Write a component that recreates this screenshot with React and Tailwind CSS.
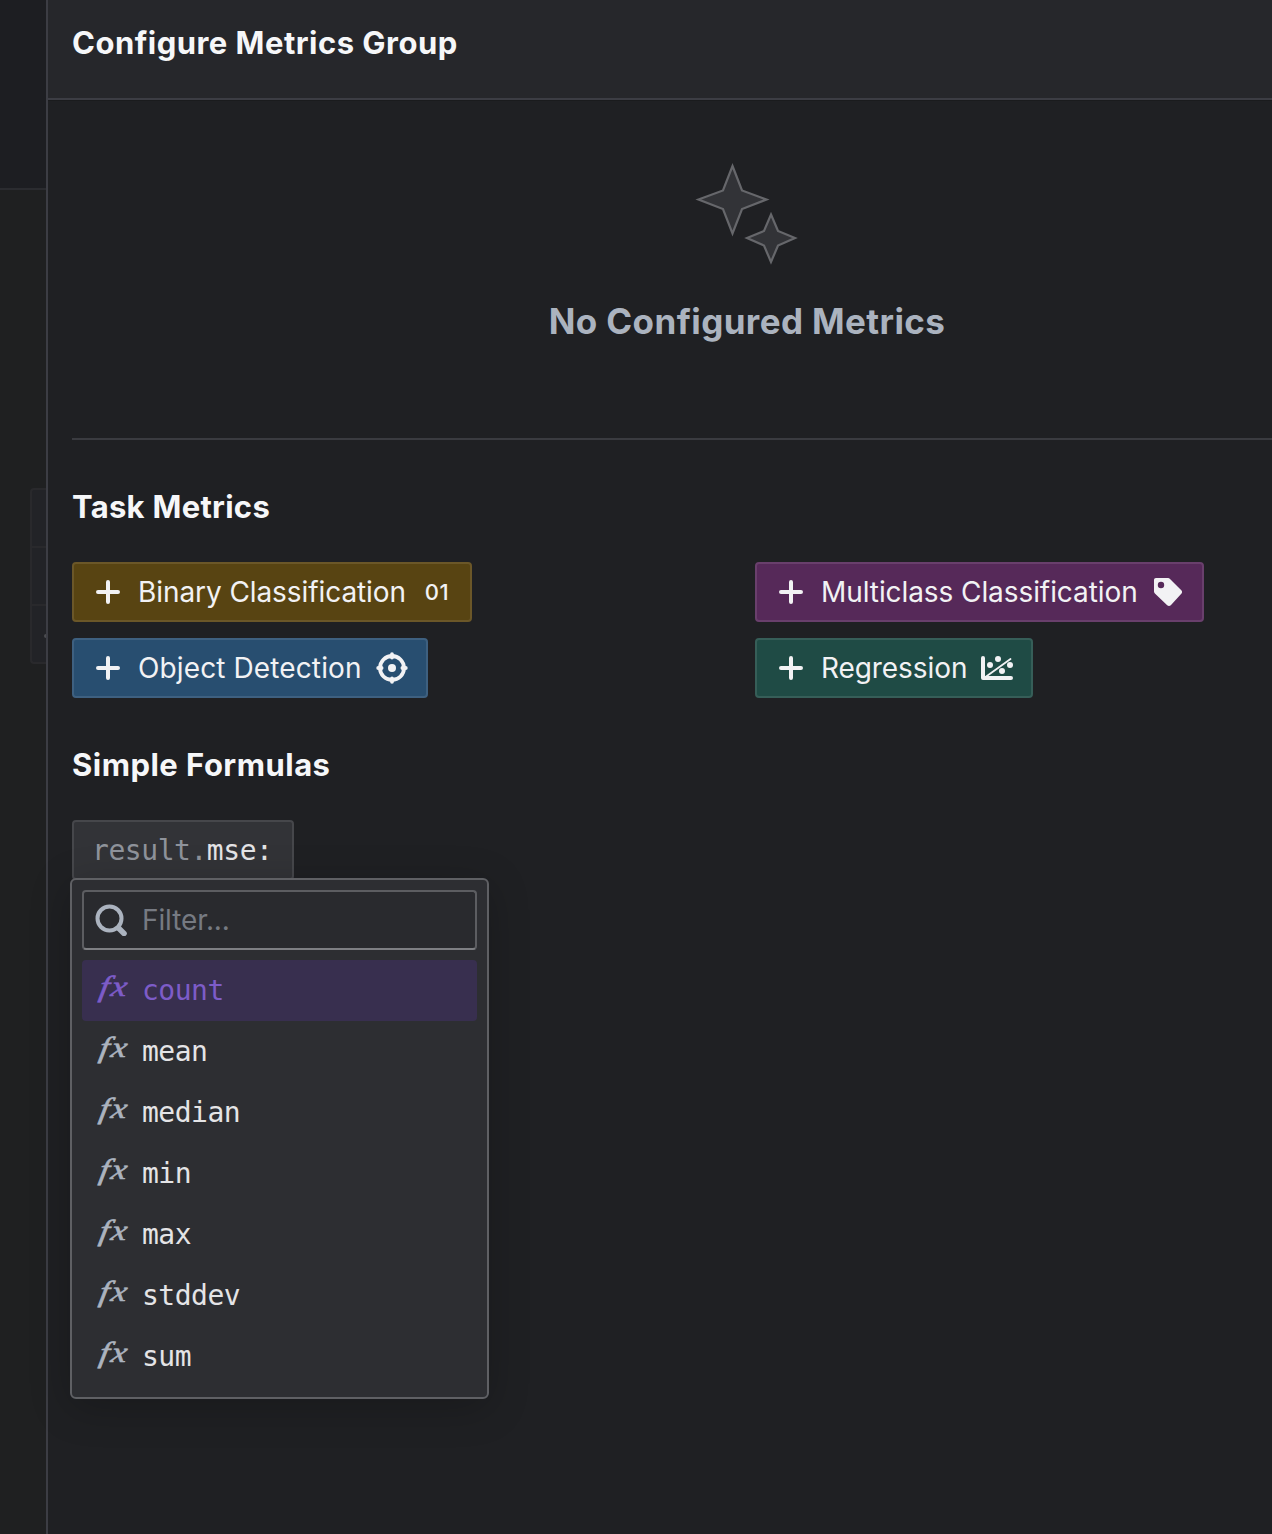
const Plus = () => (
  <svg className="size-8 shrink-0" viewBox="0 0 16 16" fill="none" stroke="currentColor" strokeWidth="2" strokeLinecap="round">
    <path d="M8 3v10M3 8h10" />
  </svg>
);

const Target = () => (
  <svg className="size-8 shrink-0" viewBox="0 0 32 32" fill="none" stroke="currentColor">
    <circle cx="16" cy="16" r="12" strokeWidth="3.8" />
    <path d="M16 2.200v3.400M16 26.400v3.400M2.200 16h3.400M26.400 16h3.400" strokeWidth="3.800" strokeLinecap="round" />
    <circle cx="16" cy="16" r="4" fill="currentColor" stroke="none" />
  </svg>
);

const Tag = () => (
  <svg className="size-8 shrink-0" viewBox="0 0 32 32" fill="currentColor">
    <path fillRule="evenodd" d="M4 2h11.600c1 0 1.700.2 2.400.9l11.300 11.300c1 1 1 2.600 0 3.600L18.800 29.300c-1 1-2.600 1-3.600 0L2.900 17.400C2.300 16.800 2 16.200 2 15.400V4c0-1.200.8-2 2-2zM9 5.800a3.200 3.200 0 1 0 0 6.400 3.200 3.200 0 0 0 0-6.400z" />
  </svg>
);

const Scatter = () => (
  <svg className="size-8 shrink-0" viewBox="0 0 32 32" fill="currentColor">
    <path d="M2 6v20h28" fill="none" stroke="currentColor" strokeWidth="4" strokeLinecap="round" strokeLinejoin="round" />
    <path d="M4.500 25 29.500 7" fill="none" stroke="currentColor" strokeWidth="1.800" strokeLinecap="round" />
    <circle cx="9" cy="13" r="3" />
    <circle cx="17" cy="7" r="3" />
    <circle cx="21" cy="19" r="3" />
    <circle cx="29" cy="13" r="3" />
  </svg>
);

const Digits = () => <span className="-ml-px w-8 shrink-0 text-center text-[22px] font-medium tracking-[0.5px]">01</span>;

const tasks = [
  { label: "Binary Classification", icon: Digits, box: "w-[400px] bg-[#584412] border-[#6b5728]", text: "w-[270px] tracking-[-0.08px]" },
  { label: "Multiclass Classification", icon: Tag, box: "w-[449px] bg-[#562959] border-[#693f6c]", text: "w-[317px] tracking-[-0.08px]" },
  { label: "Object Detection", icon: Target, box: "w-[356px] bg-[#284e70] border-[#3e6080]", text: "w-[224px] tracking-[0.12px]" },
  { label: "Regression", icon: Scatter, box: "w-[278px] bg-[#1f4b45] border-[#365e58]", text: "w-[146px] tracking-[-0.08px]" },
];

const formulas = ["count", "mean", "median", "min", "max", "stddev", "sum"];

function TaskButton({ label, icon: Icon, box, text }) {
  return (
    <button className={`flex h-[60px] items-center rounded-[4px] border-2 pl-[18px] text-left text-[#f2f2f4] ${box}`}>
      <Plus />
      <span className={`ml-[14px] mr-[14px] shrink-0 whitespace-nowrap text-[28px] ${text}`}>{label}</span>
      <Icon />
    </button>
  );
}

function FormulaMenu() {
  return (
    <div className="absolute -left-[4px] top-[56px] z-10 w-[419px] rounded-[6px] border-2 border-[#5f6064] bg-[#2d2e32] p-[10px] tracking-normal shadow-[0_8px_40px_rgba(0,0,0,0.22)]">
      <div className="mb-[10px] flex h-[60px] items-center rounded-[4px] border-2 border-[#5c5d61] border-b-[#7e7f83] bg-[#292a2e] pl-[11px]">
        <svg className="size-8 shrink-0 text-[#abb3bf]" viewBox="0 0 32 32" fill="none" stroke="currentColor">
          <circle cx="14.500" cy="14.500" r="12" strokeWidth="4" />
          <path d="m24 24.500 5 5" strokeWidth="5.500" strokeLinecap="round" />
        </svg>
        <span className="ml-[15px] text-[28px] tracking-[-0.1px] text-[#767a82]">Filter...</span>
      </div>
      {formulas.map((name, i) => (
        <div
          key={name}
          className={`flex h-[61px] items-center rounded-[4px] pl-[15px] ${i === 0 ? "bg-[#382f4f] text-[#7d5cc8]" : "text-[#e4e4e6]"}`}
        >
          <span className={`flex w-[45px] shrink-0 pl-[3px] font-['Liberation_Serif',serif] text-[29px] italic leading-none ${i === 0 ? "" : "text-[#abb3bf]"}`}>
            <span className="block origin-left -translate-y-[4px] tracking-[1.5px] [transform:scaleX(1.22)_skewX(-8deg)] [-webkit-text-stroke:0.6px_currentColor]">fx</span>
          </span>
          <span className="font-['DejaVu_Sans_Mono',monospace] text-[28px] tracking-[-0.5px]">{name}</span>
        </div>
      ))}
    </div>
  );
}

export default function App() {
  return (
    <div className="flex h-[1534px] w-[1272px] overflow-hidden bg-[#1f2023] font-['Inter',sans-serif] leading-none">
      <aside className="flex w-[46px] shrink-0 flex-col bg-[#1f2021]">
        <div className="h-[190px] border-b-2 border-[#2b2c30] bg-[#1d1e22]" />
        <div className="mt-[298px] ml-[30px] h-[176px] overflow-hidden rounded-l-[4px] border-2 border-r-0 border-[#29292c] bg-[#222327]">
          <div className="h-[58px] border-b-2 border-[#29292c]" />
          <div className="h-[58px] border-b-2 border-[#29292c]" />
          <div className="ml-3 mt-[28px] size-1 rounded-full bg-[#4b4c50]" />
        </div>
      </aside>

      <main className="w-[1400px] shrink-0 border-l-2 border-[#3c3d44]">
        <header className="h-[100px] border-b-2 border-[#3c3d44] bg-[#26272b] pl-6 pt-[24px] text-[31px] font-bold leading-[38px] text-[#f6f7f9]">
          <h1 className="tracking-[0.48px]">Configure Metrics Group</h1>
        </header>
        <div className="h-[1px] bg-[#1a1b1d]" />

        <div className="ml-6 w-[1350px]">
          <section className="flex h-[339px] flex-col items-center border-b-2 border-[#3a3b40] pt-[59px]">
            <svg className="h-[108px] w-[108px]" viewBox="0 0 108 108" fill="#323337" stroke="#66676b" strokeWidth="2.2">
              <path strokeMiterlimit="10" d="M39.500 6 49 30.500 73.500 39.500 49 49 39.500 73.500 30 49 5.500 39.500 30 30.500z" />
              <path strokeMiterlimit="10" d="M78 54.500 85 71 102 78 85 85.500 78 102 71 85.500 54 78 71 71z" />
            </svg>
            <h2 className="mt-[31px] text-[35px] font-bold leading-[44px] tracking-[0.4px] text-[#abb3bf]">No Configured Metrics</h2>
          </section>

          <section className="pt-[48px]">
            <h3 className="text-[31px] font-bold leading-[38px] tracking-[0.28px] text-[#f6f7f9]">Task Metrics</h3>
            <div className="mt-[36px] grid grid-cols-2 gap-4">
              {tasks.map((t) => (
                <TaskButton key={t.label} {...t} />
              ))}
            </div>
          </section>

          <section className="pt-[48px]">
            <h3 className="text-[31px] font-bold leading-[38px] tracking-[0.48px] text-[#f6f7f9]">Simple Formulas</h3>
            <div className="relative mt-[36px] h-[60px] w-[222px] rounded-[4px] border-2 border-[#46474b] bg-[#323337]">
              <div className="pl-[18px] pt-[15px] font-['DejaVu_Sans_Mono',monospace] text-[28px] tracking-[-0.45px] text-[#e4e4e6]">
                <span className="text-[#8f939b]">result.</span>
                <span>mse:</span>
              </div>
              <FormulaMenu />
            </div>
          </section>
        </div>
      </main>
    </div>
  );
}
